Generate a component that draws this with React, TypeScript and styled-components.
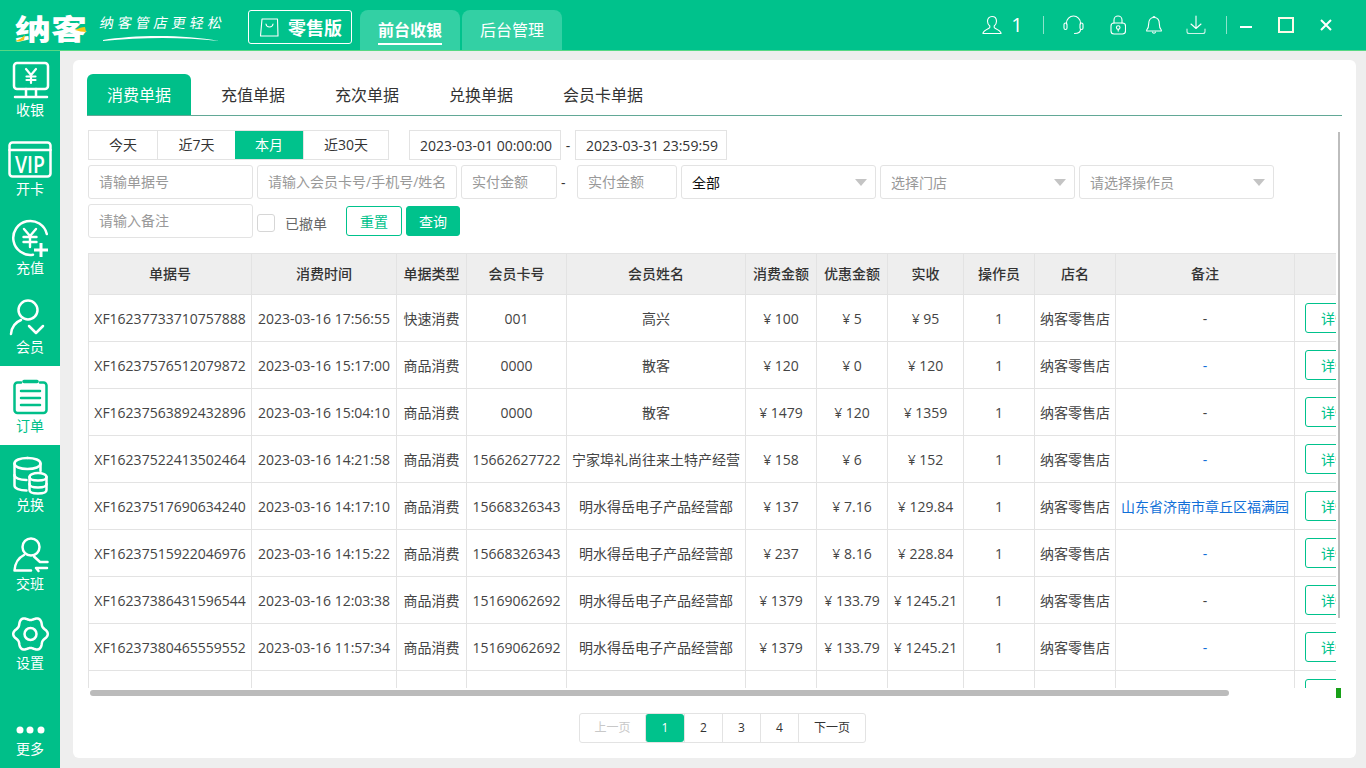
import React from "react";
import styled, { createGlobalStyle } from "styled-components";

const GREEN = "#00c28c";
const LINE = "#e3e3e3";

const GlobalStyle = createGlobalStyle`
  html, body {
    margin: 0;
    background: #eeeeee;
    font-family: "Open Sans", "Noto Sans CJK SC", sans-serif;
    font-size: 14px;
    color: #333;
  }
  * { box-sizing: border-box; }
`;

const orders = [
  { no: "XF16237733710757888", time: "2023-03-16 17:56:55", type: "快速消费", card: "001", name: "高兴", amount: "¥ 100", off: "¥ 5", paid: "¥ 95", note: "-", blue: false },
  { no: "XF16237576512079872", time: "2023-03-16 15:17:00", type: "商品消费", card: "0000", name: "散客", amount: "¥ 120", off: "¥ 0", paid: "¥ 120", note: "-", blue: true },
  { no: "XF16237563892432896", time: "2023-03-16 15:04:10", type: "商品消费", card: "0000", name: "散客", amount: "¥ 1479", off: "¥ 120", paid: "¥ 1359", note: "-", blue: false },
  { no: "XF16237522413502464", time: "2023-03-16 14:21:58", type: "商品消费", card: "15662627722", name: "宁家埠礼尚往来土特产经营", amount: "¥ 158", off: "¥ 6", paid: "¥ 152", note: "-", blue: true },
  { no: "XF16237517690634240", time: "2023-03-16 14:17:10", type: "商品消费", card: "15668326343", name: "明水得岳电子产品经营部", amount: "¥ 137", off: "¥ 7.16", paid: "¥ 129.84", note: "山东省济南市章丘区福满园", blue: true },
  { no: "XF16237515922046976", time: "2023-03-16 14:15:22", type: "商品消费", card: "15668326343", name: "明水得岳电子产品经营部", amount: "¥ 237", off: "¥ 8.16", paid: "¥ 228.84", note: "-", blue: true },
  { no: "XF16237386431596544", time: "2023-03-16 12:03:38", type: "商品消费", card: "15169062692", name: "明水得岳电子产品经营部", amount: "¥ 1379", off: "¥ 133.79", paid: "¥ 1245.21", note: "-", blue: false },
  { no: "XF16237380465559552", time: "2023-03-16 11:57:34", type: "商品消费", card: "15169062692", name: "明水得岳电子产品经营部", amount: "¥ 1379", off: "¥ 133.79", paid: "¥ 1245.21", note: "-", blue: true },
];

const columns = [
  { title: "单据号", width: 163 },
  { title: "消费时间", width: 145 },
  { title: "单据类型", width: 70 },
  { title: "会员卡号", width: 100 },
  { title: "会员姓名", width: 179 },
  { title: "消费金额", width: 71 },
  { title: "优惠金额", width: 71 },
  { title: "实收", width: 76 },
  { title: "操作员", width: 71 },
  { title: "店名", width: 81 },
  { title: "备注", width: 179 },
  { title: "", width: 90 },
];

const Shell = styled.div`
  width: 1366px;
  height: 768px;
  overflow: hidden;
  display: flex;
  flex-direction: column;
`;

const TopBar = styled.header`
  position: relative;
  z-index: 1;
  flex: none;
  height: 50px;
  display: flex;
  background: ${GREEN};
  box-shadow: 0 1px 0 #58d884;
  color: #fff;
`;

const LogoBox = styled.div`
  position: relative;
  width: 72px;
  margin-left: 15px;
  font-size: 36px;
  line-height: 54px;
  font-weight: 900;
  font-family: "Noto Sans CJK SC", sans-serif;
  white-space: nowrap;
`;

const LogoText = styled.span`
  display: inline-block;
  transform: scaleY(0.8);
`;

const LogoAccent = styled.svg`
  position: absolute;
  left: 0;
  top: 0;
`;

const Slogan = styled.div`
  width: 125px;
  margin-left: 13px;
  padding-top: 12px;
`;

const SloganText = styled.div`
  font-family: "Noto Sans CJK SC", sans-serif;
  font-size: 14px;
  line-height: 20px;
  letter-spacing: 4px;
  white-space: nowrap;
  transform: skewX(-10deg);
`;

const Swoosh = styled.svg`
  display: block;
  margin: 2px 0 0 3px;
`;

const Edition = styled.div`
  width: 104px;
  height: 34px;
  margin: 10px 0 0 23px;
  padding-left: 10px;
  display: flex;
  align-items: center;
  gap: 8px;
  border: 1px solid #fff;
  border-radius: 3px;
  font-size: 18px;
  font-weight: 700;
  white-space: nowrap;
`;

const ModuleTabs = styled.nav`
  display: flex;
  gap: 2px;
  margin: 10px 0 0 8px;
`;

const ModuleTab = styled.div`
  width: 100px;
  height: 40px;
  display: flex;
  justify-content: center;
  padding-top: 8px;
  background: #33d0a4;
  border-radius: 8px 8px 0 0;
  font-size: 16px;
`;

const ModuleLabel = styled.span<{ $active?: boolean }>`
  height: 27px;
  line-height: 24px;
  font-weight: ${(p) => (p.$active ? 700 : 400)};
  border-bottom: ${(p) => (p.$active ? "2px solid #fff" : "none")};
`;

const Tools = styled.div`
  display: flex;
  align-items: center;
  margin-left: auto;
  padding-right: 34px;
`;

const Tool = styled.div<{ $ml: number; $w: number }>`
  display: flex;
  justify-content: center;
  width: ${(p) => p.$w}px;
  margin-left: ${(p) => p.$ml}px;
  font-size: 20px;
  line-height: 24px;
`;

const Separator = styled.div<{ $ml: number }>`
  width: 1px;
  height: 18px;
  margin-left: ${(p) => p.$ml}px;
  background: rgba(255, 255, 255, 0.55);
`;

const Body = styled.div`
  flex: 1;
  display: flex;
  min-height: 0;
`;

const Sidebar = styled.aside`
  flex: none;
  width: 60px;
  display: flex;
  flex-direction: column;
  background: #00bf89;
`;

const NavItem = styled.div<{ $active?: boolean; $bottom?: boolean }>`
  height: 79px;
  padding-top: 8px;
  display: flex;
  flex-direction: column;
  align-items: center;
  margin-top: ${(p) => (p.$bottom ? "auto" : "0")};
  background: ${(p) => (p.$active ? "#fff" : "transparent")};
  color: ${(p) => (p.$active ? "#00bf89" : "#fff")};
  font-size: 14px;
  line-height: 16px;
`;

const Main = styled.main`
  flex: 1;
  padding: 10px 10px 10px 13px;
`;

const Card = styled.section`
  position: relative;
  height: 698px;
  padding: 14px;
  background: #fff;
  border-radius: 6px;
`;

const TabList = styled.div`
  display: flex;
  gap: 10px;
  width: 1255px;
  height: 42px;
  border-bottom: 1px solid #62a896;
`;

const Tab = styled.div<{ $active?: boolean }>`
  padding: 0 20px;
  height: 41px;
  line-height: 43px;
  font-size: 16px;
  border-radius: 6px 6px 0 0;
  color: ${(p) => (p.$active ? "#fff" : "#333")};
  background: ${(p) => (p.$active ? "#00bf89" : "transparent")};
`;

const Filters = styled.div`
  display: flex;
  flex-direction: column;
  gap: 5px;
  margin: 14px 0 0 1px;
`;

const FilterRow = styled.div<{ $tight?: boolean }>`
  display: flex;
  align-items: center;
  gap: ${(p) => (p.$tight ? 0 : 4)}px;
`;

const Segments = styled.div`
  display: flex;
  margin-right: 20px;
  border: 1px solid ${LINE};
`;

const Segment = styled.div<{ $w: number; $active?: boolean }>`
  width: ${(p) => p.$w}px;
  height: 28px;
  line-height: 28px;
  text-align: center;
  border-left: ${(p) => (p.$active ? "none" : `1px solid ${LINE}`)};
  color: ${(p) => (p.$active ? "#fff" : "#333")};
  background: ${(p) => (p.$active ? GREEN : "#fff")};
  &:first-child { border-left: none; }
`;

const Field = styled.input<{ $w: number }>`
  width: ${(p) => p.$w}px;
  height: 34px;
  padding: 0 10px 2px;
  border: 1px solid ${LINE};
  border-radius: 3px;
  outline: none;
  font: inherit;
  color: #333;
  &::placeholder { color: #999; opacity: 1; }
`;

const DateField = styled(Field)`
  height: 30px;
  padding: 0 0 0 10px;
  border-radius: 0;
`;

const RangeDash = styled.span<{ $w: number; $center?: boolean }>`
  width: ${(p) => p.$w}px;
  text-align: ${(p) => (p.$center ? "center" : "left")};
`;

const Select = styled.div<{ $empty?: boolean }>`
  width: 195px;
  height: 34px;
  padding: 0 8px 0 10px;
  display: flex;
  align-items: center;
  justify-content: space-between;
  border: 1px solid ${LINE};
  border-radius: 3px;
  color: ${(p) => (p.$empty ? "#999" : "#111")};
`;

const Caret = styled.i`
  width: 0;
  height: 0;
  border-left: 6px solid transparent;
  border-right: 6px solid transparent;
  border-top: 7px solid #c4c4c4;
`;

const Check = styled.span`
  width: 18px;
  height: 18px;
  margin: 4px 6px 0 0;
  border: 1px solid #d6d6d6;
  border-radius: 3px;
`;

const CheckLabel = styled.span`
  margin: 4px 15px 0 0;
  color: #666;
`;

const ActionButton = styled.button<{ $solid?: boolean }>`
  height: 30px;
  width: ${(p) => (p.$solid ? 54 : 56)}px;
  padding: 0;
  border: 1px solid ${GREEN};
  border-radius: 3px;
  font: inherit;
  color: ${(p) => (p.$solid ? "#fff" : GREEN)};
  background: ${(p) => (p.$solid ? GREEN : "#fff")};
`;

const TableWrap = styled.div`
  width: 1248px;
  height: 435px;
  margin: 15px 0 0 1px;
  overflow: hidden;
`;

const Table = styled.table`
  table-layout: fixed;
  width: 1256px;
  border-collapse: collapse;
`;

const Th = styled.th`
  height: 41px;
  padding: 0 0 2px;
  border: 1px solid ${LINE};
  background: #eeeeee;
  font-weight: 500;
  color: #333;
`;

const Td = styled.td<{ $blue?: boolean }>`
  height: 47px;
  padding: 0;
  border: 1px solid ${LINE};
  text-align: center;
  white-space: nowrap;
  color: ${(p) => (p.$blue ? "#0f6fd8" : "#444")};
`;

const DetailButton = styled.button`
  display: block;
  width: 60px;
  height: 30px;
  margin-left: 10px;
  padding: 0;
  border: 1px solid ${GREEN};
  border-radius: 3px;
  background: #fff;
  font: inherit;
  color: ${GREEN};
`;

const HScroll = styled.div`
  width: 1139px;
  height: 6px;
  margin: 2px 0 0 3px;
  border-radius: 3px;
  background: #bbbbbb;
`;

const VScrollLine = styled.div`
  position: absolute;
  left: 1265px;
  top: 72px;
  width: 2px;
  height: 486px;
  background: #bdbdbd;
`;

const ScrollCorner = styled.div`
  position: absolute;
  left: 1263px;
  top: 628px;
  width: 5px;
  height: 10px;
  background: #18a018;
`;

const Pager = styled.div`
  display: flex;
  width: 287px;
  height: 30px;
  margin: 17px 0 0 492px;
  border: 1px solid ${LINE};
  border-radius: 3px;
  font-size: 12px;
`;

const PageItem = styled.div<{ $w: number; $active?: boolean; $disabled?: boolean }>`
  width: ${(p) => p.$w}px;
  line-height: 28px;
  text-align: center;
  border-left: 1px solid ${LINE};
  border-radius: ${(p) => (p.$active ? "3px" : "0")};
  color: ${(p) => (p.$active ? "#fff" : p.$disabled ? "#c8c8c8" : "#333")};
  background: ${(p) => (p.$active ? GREEN : "transparent")};
  &:first-child { border-left: none; }
`;

const stroke = {
  fill: "none",
  stroke: "currentColor",
  strokeWidth: 2.5,
  strokeLinecap: "round" as const,
  strokeLinejoin: "round" as const,
};

const thin = {
  fill: "none",
  stroke: "currentColor",
  strokeWidth: 1.1,
  strokeLinecap: "round" as const,
  strokeLinejoin: "round" as const,
};

const IconBox = ({ children }: { children: React.ReactNode }) => (
  <svg width="44" height="44" viewBox="0 0 44 44">
    {children}
  </svg>
);

const gearPath = () => {
  const pts: string[] = [];
  for (let i = 0; i < 72; i++) {
    const a = (i / 72) * Math.PI * 2;
    const r = 15.6 + 1.7 * Math.cos(6 * a);
    pts.push(`${(22.5 + r * Math.cos(a)).toFixed(2)} ${(23 + r * Math.sin(a)).toFixed(2)}`);
  }
  return `M${pts.join("L")}Z`;
};

const navIcons: Record<string, React.ReactNode> = {
  收银: (
    <g {...stroke}>
      <rect x="6" y="5" width="34" height="26" rx="3" />
      <path d="M18 11l5 6 5-6M23 17v8M18.500 18.500h9M18.500 22h9" strokeWidth="2.2" />
      <path d="M18 31v7M28 31v7M7 39h32" />
    </g>
  ),
  开卡: (
    <g>
      <rect x="1.500" y="5.500" width="41" height="34" rx="3" {...stroke} />
      <path d="M1.500 13h41" {...stroke} />
      <text x="7" y="35.500" textLength="30" lengthAdjust="spacingAndGlyphs" fontFamily="Open Sans, sans-serif" fontWeight="600" fontSize="23" fill="currentColor">
        VIP
      </text>
    </g>
  ),
  充值: (
    <g {...stroke}>
      <path d="M38.800 18A17 17 0 1 0 25 38.700" />
      <path d="M16 13l6 7 6-7M22 20v11M15.500 21h13M15.500 26h13" strokeWidth="2.4" />
      <path d="M33 27v14M26 34h14" strokeWidth="3" strokeLinecap="butt" />
    </g>
  ),
  会员: (
    <g {...stroke}>
      <circle cx="20" cy="15" r="9.500" />
      <path d="M3 39c.6-7 5-12 10-14" />
      <path d="M21 31l7 7 7-7" />
    </g>
  ),
  订单: (
    <g {...stroke}>
      <path d="M13 8.500H9.500a3 3 0 0 0-3 3V36a3 3 0 0 0 3 3h26a3 3 0 0 0 3-3V11.500a3 3 0 0 0-3-3H32" />
      <path d="M16 7.500h13" strokeWidth="3.500" />
      <path d="M13 17h19M13 24h19M13 31h19" />
    </g>
  ),
  兑换: (
    <g {...stroke}>
      <path d="M19.500 5C12 5 6.500 7.200 6.500 10.500v22c0 3 5 5 12 5" />
      <path d="M6.500 10.500c0 3.300 5.500 5.500 13 5.500s13-2.200 13-5.500S27 5 19.500 5" />
      <path d="M6.500 22c0 3 5 5 12 5M32.500 10.500V18" />
      <path d="M21.500 24c0-2.500 4-4 8.500-4s8.500 1.500 8.500 4v13c0 2.500-4 3.500-8.500 3.500s-8.500-1-8.500-3.500z" />
      <path d="M21.500 24c0 2.300 4 3.500 8.500 3.500s8.500-1.200 8.500-3.500M21.500 31c0 2.300 4 3.500 8.500 3.500s8.500-1.200 8.500-3.500" />
    </g>
  ),
  交班: (
    <g {...stroke}>
      <circle cx="23" cy="15" r="8.500" />
      <path d="M16 23c-5 2.500-9 8-9.500 15.500H23" />
      <path d="M26 24.500l6 5.500h7.500M39 36H28l2.500 3" />
    </g>
  ),
  设置: (
    <g {...stroke}>
      <path d={gearPath()} />
      <circle cx="22.500" cy="23" r="6" />
    </g>
  ),
  更多: (
    <g fill="currentColor">
      <circle cx="12" cy="33" r="3.500" />
      <circle cx="22" cy="33" r="3.500" />
      <circle cx="33" cy="33" r="3.500" />
    </g>
  ),
};

const navItems = ["收银", "开卡", "充值", "会员", "订单", "兑换", "交班", "设置"];

const App = () => {
  return (
    <Shell>
      <GlobalStyle />
      <TopBar>
        <LogoBox>
          <LogoText>纳客</LogoText>
          <LogoAccent width="72" height="50" viewBox="0 0 72 50">
            <path d="M0 41c4-1 7-3 10-6l-1 5c-3 1-6 2-9 1z" fill="#f5c518" />
            <path d="M60 30c4-2 7-3 10-3l1 5c-4 0-7-1-11-2z" fill="#f5c518" />
          </LogoAccent>
        </LogoBox>
        <Slogan>
          <SloganText>纳客管店更轻松</SloganText>
          <Swoosh width="118" height="8" viewBox="0 0 118 8">
            <path d="M0 6C30 1 80 0 116 7C80 3 40 3 0 7z" fill="#fff" />
          </Swoosh>
        </Slogan>
        <Edition>
          <svg width="21" height="21" viewBox="0 0 21 21" fill="none" stroke="#fff" strokeWidth="1.1">
            <path d="M3 2h15.500l.5 17H1.500z" strokeLinejoin="round" />
            <path d="M7 7c.5 4 6.500 4 7 0" strokeLinecap="round" />
          </svg>
          零售版
        </Edition>
        <ModuleTabs>
          <ModuleTab>
            <ModuleLabel $active>前台收银</ModuleLabel>
          </ModuleTab>
          <ModuleTab>
            <ModuleLabel>后台管理</ModuleLabel>
          </ModuleTab>
        </ModuleTabs>
        <Tools>
          <Tool $ml={0} $w={20}>
            <svg width="20" height="20" viewBox="0 0 20 20" {...thin}>
              <path d="M10 1.500c2.800 0 4.500 2.200 4.500 4.800 0 2-.9 3.700-2.300 4.700v1.600c0 .8 5.800 2.200 6.800 5.400v.5H1v-.5c1-3.200 6.800-4.600 6.800-5.400V11C6.400 10 5.500 8.300 5.500 6.300 5.500 3.700 7.200 1.500 10 1.500z" />
            </svg>
          </Tool>
          <Tool $ml={9} $w={12}>1</Tool>
          <Separator $ml={20} />
          <Tool $ml={19} $w={21}>
            <svg width="21" height="20" viewBox="0 0 21 20" {...thin}>
              <path d="M3.500 9V8a7 7 0 0 1 14 0v1" />
              <rect x="1" y="8" width="3" height="6.500" rx="1.500" />
              <rect x="17" y="8" width="3" height="6.500" rx="1.500" />
              <path d="M17.500 14.500c0 2.500-2.500 4-6 4" />
            </svg>
          </Tool>
          <Tool $ml={26} $w={16}>
            <svg width="16" height="20" viewBox="0 0 16 20" {...thin}>
              <rect x="1" y="8" width="14.500" height="11" rx="3" />
              <path d="M4 8V5a4 4 0 0 1 8 0v3" />
              <circle cx="8.200" cy="12.500" r="1.800" />
              <path d="M8.200 14.300v1.800" />
            </svg>
          </Tool>
          <Tool $ml={20} $w={16}>
            <svg width="16" height="20" viewBox="0 0 16 20" {...thin}>
              <path d="M8 2.500c3.500 0 5.300 2.700 5.300 6.200 0 3.500.8 5 2 6.300v1H.7v-1c1.200-1.300 2-2.800 2-6.300 0-3.500 1.800-6.200 5.300-6.200z" />
              <path d="M7 2.500c0-1.400 2-1.400 2 0M6.500 17c.3 1.600 2.700 1.600 3 0" />
            </svg>
          </Tool>
          <Tool $ml={24} $w={20}>
            <svg width="20" height="20" viewBox="0 0 20 20" {...thin}>
              <path d="M10 1v12.500M5 9l5 4.500L15 9" />
              <path d="M1 14v2.500a2 2 0 0 0 2 2h14a2 2 0 0 0 2-2V14" opacity="0.8" />
            </svg>
          </Tool>
          <Separator $ml={20} />
          <Tool $ml={13} $w={12}>
            <svg width="12" height="16" viewBox="0 0 12 16" fill="#fff">
              <rect y="9" width="12" height="2" />
            </svg>
          </Tool>
          <Tool $ml={26} $w={16}>
            <svg width="16" height="16" viewBox="0 0 16 16" fill="none" stroke="#fbfbe8" strokeWidth="2">
              <rect x="1" y="1" width="14" height="14" />
            </svg>
          </Tool>
          <Tool $ml={26} $w={12}>
            <svg width="12" height="12" viewBox="0 0 12 12" fill="none" stroke="#fff" strokeWidth="2">
              <path d="M1 1l10 10M11 1L1 11" />
            </svg>
          </Tool>
        </Tools>
      </TopBar>
      <Body>
        <Sidebar>
          {navItems.map((item) => (
            <NavItem key={item} $active={item === "订单"}>
              <IconBox>{navIcons[item]}</IconBox>
              {item}
            </NavItem>
          ))}
          <NavItem $bottom>
            <IconBox>{navIcons["更多"]}</IconBox>
            更多
          </NavItem>
        </Sidebar>
        <Main>
          <Card>
            <TabList>
              <Tab $active>消费单据</Tab>
              <Tab>充值单据</Tab>
              <Tab>充次单据</Tab>
              <Tab>兑换单据</Tab>
              <Tab>会员卡单据</Tab>
            </TabList>
            <Filters>
              <FilterRow $tight>
                <Segments>
                  <Segment $w={68}>今天</Segment>
                  <Segment $w={78}>近7天</Segment>
                  <Segment $w={68} $active>本月</Segment>
                  <Segment $w={85}>近30天</Segment>
                </Segments>
                <DateField $w={152} defaultValue="2023-03-01 00:00:00" />
                <RangeDash $w={14} $center>-</RangeDash>
                <DateField $w={152} defaultValue="2023-03-31 23:59:59" />
              </FilterRow>
              <FilterRow>
                <Field $w={165} placeholder="请输单据号" />
                <Field $w={200} placeholder="请输入会员卡号/手机号/姓名" />
                <Field $w={96} placeholder="实付金额" />
                <RangeDash $w={12}>-</RangeDash>
                <Field $w={100} placeholder="实付金额" />
                <Select>
                  全部
                  <Caret />
                </Select>
                <Select $empty>
                  选择门店
                  <Caret />
                </Select>
                <Select $empty>
                  请选择操作员
                  <Caret />
                </Select>
              </FilterRow>
              <FilterRow>
                <Field $w={165} placeholder="请输入备注" />
                <Check />
                <CheckLabel>已撤单</CheckLabel>
                <ActionButton>重置</ActionButton>
                <ActionButton $solid>查询</ActionButton>
              </FilterRow>
            </Filters>
            <TableWrap>
              <Table>
                <colgroup>
                  {columns.map((c, i) => (
                    <col key={i} style={{ width: c.width }} />
                  ))}
                </colgroup>
                <thead>
                  <tr>
                    {columns.map((c, i) => (
                      <Th key={i}>{c.title}</Th>
                    ))}
                  </tr>
                </thead>
                <tbody>
                  {orders.map((o) => (
                    <tr key={o.no}>
                      <Td>{o.no}</Td>
                      <Td>{o.time}</Td>
                      <Td>{o.type}</Td>
                      <Td>{o.card}</Td>
                      <Td>{o.name}</Td>
                      <Td>{o.amount}</Td>
                      <Td>{o.off}</Td>
                      <Td>{o.paid}</Td>
                      <Td>1</Td>
                      <Td>纳客零售店</Td>
                      <Td $blue={o.blue}>{o.note}</Td>
                      <Td>
                        <DetailButton>详情</DetailButton>
                      </Td>
                    </tr>
                  ))}
                  <tr>
                    {columns.slice(0, 11).map((c) => (
                      <Td key={c.title} />
                    ))}
                    <Td>
                      <DetailButton>详情</DetailButton>
                    </Td>
                  </tr>
                </tbody>
              </Table>
            </TableWrap>
            <HScroll />
            <VScrollLine />
            <ScrollCorner />
            <Pager>
              <PageItem $w={65} $disabled>上一页</PageItem>
              <PageItem $w={39} $active>1</PageItem>
              <PageItem $w={38}>2</PageItem>
              <PageItem $w={38}>3</PageItem>
              <PageItem $w={38}>4</PageItem>
              <PageItem $w={67}>下一页</PageItem>
            </Pager>
          </Card>
        </Main>
      </Body>
    </Shell>
  );
};

export default App;
